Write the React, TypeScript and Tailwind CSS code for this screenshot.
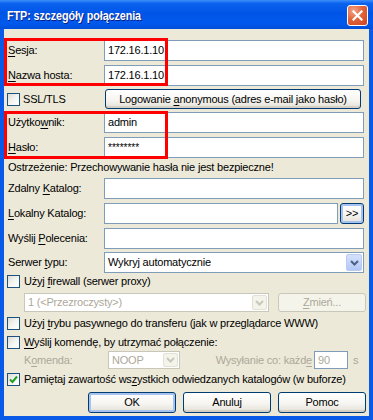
import React from 'react';

const U = ({ children }: { children: React.ReactNode }) => (
  <span className="underline decoration-1 underline-offset-[2px]">{children}</span>
);

function Field({ value, className = '', disabled = false }: { value?: string; className?: string; disabled?: boolean }) {
  return (
    <div
      className={`h-full bg-white border border-[#7F9DB9] pl-[3px] flex items-center whitespace-nowrap ${disabled ? 'text-[#ACA899]' : ''} ${className}`}
    >
      {value}
    </div>
  );
}

function Chevron({ color }: { color: string }) {
  return (
    <svg width="9" height="6" viewBox="0 0 9 6">
      <path d="M1 1 L4.5 4.5 L8 1" fill="none" stroke={color} strokeWidth="2" />
    </svg>
  );
}

function Combo({ value, className = '', disabled = false }: { value: string; className?: string; disabled?: boolean }) {
  return (
    <div
      className={`h-full flex items-stretch border bg-white p-[1px] ${disabled ? 'border-[#C9C7BA] text-[#ACA899]' : 'border-[#7F9DB9]'} ${className}`}
    >
      <div className="flex-1 flex items-center pl-[2px] whitespace-nowrap overflow-hidden">{value}</div>
      {disabled ? (
        <div className="w-[15px] shrink-0 flex items-center justify-center rounded-[2px] border border-[#E3E1D6] bg-[#F5F4EA]">
          <Chevron color="#C9C7BA" />
        </div>
      ) : (
        <div className="w-[16px] shrink-0 flex items-center justify-center rounded-[2px] border border-[#B9CBF3] bg-gradient-to-b from-[#D6E2FC] to-[#B2C8F6]">
          <Chevron color="#4D6185" />
        </div>
      )}
    </div>
  );
}

function Check({ checked = false }: { checked?: boolean }) {
  return (
    <div className="w-[13px] h-[13px] shrink-0 border border-[#1C5180] bg-gradient-to-br from-[#DCDCD7] via-[#F4F4F0] to-white flex items-center justify-center">
      {checked && (
        <svg width="9" height="9" viewBox="0 0 9 9">
          <path d="M1 4.5 L3.5 7 L8 1.5" fill="none" stroke="#21A121" strokeWidth="2" />
        </svg>
      )}
    </div>
  );
}

function Btn({ children, className = '', focus = false }: { children: React.ReactNode; className?: string; focus?: boolean }) {
  return (
    <div
      className={`flex items-center justify-center rounded-[3px] border border-[#003C74] bg-[linear-gradient(180deg,#FFFFFF_0%,#F6F5F1_55%,#E8E6DD_88%,#D6D0C5_100%)] whitespace-nowrap ${focus ? 'shadow-[inset_0_0_0_2px_#A8C2EF]' : 'shadow-[inset_0_-2px_0_#D6D0C5]'} ${className}`}
    >
      <span>{children}</span>
    </div>
  );
}

function Row({ label, children, className = '' }: { label: React.ReactNode; children: React.ReactNode; className?: string }) {
  return (
    <div className={`flex items-center h-[21px] ${className}`}>
      <div className="w-[96px] shrink-0 whitespace-nowrap">{label}</div>
      <div className="flex-1 flex h-full">{children}</div>
    </div>
  );
}

export default function App() {
  return (
    <div className="w-[373px] h-[420px] flex flex-col bg-[#0A5AE8] font-['Liberation_Sans','Noto_Sans',sans-serif] text-[11px] tracking-[-0.2px] text-black overflow-hidden">
      <div className="h-[29px] shrink-0 flex items-start justify-between pl-[7px] pr-[5px] bg-[linear-gradient(180deg,#3D8FFB_0%,#0A62EE_12%,#0055E6_45%,#0059ED_80%,#004FD9_100%)]">
        <span className="self-center mt-[2px] font-bold text-[13px] text-white [text-shadow:1px_1px_0_#0A1E80] tracking-[-0.1px] origin-left scale-x-[0.83] whitespace-nowrap">
          FTP: szczegóły połączenia
        </span>
        <div className="mt-[5px] w-[21px] h-[21px] rounded-[3px] border border-white bg-[radial-gradient(circle_at_30%_25%,#F2A48A_0%,#E2643C_45%,#CB4420_100%)] flex items-center justify-center">
          <svg width="11" height="11" viewBox="0 0 11 11">
            <path d="M1.5 1.5 L9.5 9.5 M9.5 1.5 L1.5 9.5" stroke="white" strokeWidth="2.2" strokeLinecap="square" />
          </svg>
        </div>
      </div>

      <div className="relative ml-[4px] w-[365px] h-[387px] bg-[#ECE9D8] flex flex-col pl-[4px] pr-[5px] pt-[11px]">
        <div className="absolute left-0 top-[9px] w-[164px] h-[48px] border-[3px] border-[#FF0000] pointer-events-none z-10" />
        <div className="absolute left-0 top-[82px] w-[164px] h-[48px] border-[3px] border-[#FF0000] pointer-events-none z-10" />

        <Row label={<><U>S</U>esja:</>}>
          <Field value="172.16.1.10" className="flex-1" />
        </Row>
        <Row label={<><U>N</U>azwa hosta:</>} className="mt-[4px]">
          <Field value="172.16.1.10" className="flex-1" />
        </Row>

        <div className="flex items-center h-[20px] mt-[3px]">
          <div className="w-[98px] shrink-0 flex items-center gap-[3px] -ml-[1px]">
            <Check />
            <span>SSL/TLS</span>
          </div>
          <Btn className="h-full w-[256px]">
            Logowanie <U>a</U>nonymous (adres e-mail jako hasło)
          </Btn>
        </div>

        <Row label={<>Użytko<U>w</U>nik:</>} className="mt-[3px]">
          <Field value="admin" className="flex-1" />
        </Row>
        <Row label={<><U>H</U>asło:</>} className="mt-[4px]">
          <Field value="********" className="flex-1 text-[10px] tracking-[0px]" />
        </Row>

        <div className="h-[16px] mt-[1px] flex items-center whitespace-nowrap">
          Ostrzeżenie: Przechowywanie hasła nie jest bezpieczne!
        </div>

        <Row label={<>Zdalny <U>K</U>atalog:</>} className="mt-[3px]">
          <Field className="flex-1" />
        </Row>
        <Row label={<><U>L</U>okalny Katalog:</>} className="mt-[4px]">
          <Field className="flex-1" />
          <Btn focus className="ml-[2px] w-[24px] h-[21px] text-[11px]">&gt;&gt;</Btn>
        </Row>
        <Row label={<>Wyślij <U>P</U>olecenia:</>} className="mt-[4px]">
          <Field className="flex-1" />
        </Row>
        <Row label={<>Serwer <U>t</U>ypu:</>} className="mt-[3px]">
          <Combo value="Wykryj automatycznie" className="flex-1" />
        </Row>

        <div className="flex items-center gap-[4px] h-[13px] mt-[2px] -ml-[1px] whitespace-nowrap">
          <Check />
          <span>Użyj <U>f</U>irewall (serwer proxy)</span>
        </div>

        <div className="flex h-[19px] mt-[5px] -mr-[2px]">
          <Combo disabled value="1 (<Przezroczysty>)" className="ml-[16px] w-[245px]" />
          <div className="ml-[9px] w-[88px] h-full rounded-[3px] border border-[#C9C7BA] bg-[#F5F4EA] text-[#ACA899] flex items-center justify-center">
            <span><U>Z</U>mień...</span>
          </div>
        </div>

        <div className="flex items-center gap-[4px] h-[13px] mt-[5px] -ml-[1px] whitespace-nowrap">
          <Check />
          <span>Użyj <U>t</U>rybu pasywnego do transferu (jak w przeglądarce WWW)</span>
        </div>
        <div className="flex items-center gap-[4px] h-[13px] mt-[6px] -ml-[1px] whitespace-nowrap">
          <Check />
          <span><U>W</U>yślij komendę, by utrzymać połączenie:</span>
        </div>

        <div className="flex items-center h-[18px] mt-[2px] text-[#ACA899] whitespace-nowrap">
          <span className="ml-[16px] w-[84px]">K<U>o</U>menda:</span>
          <Combo disabled value="NOOP" className="w-[72px]" />
          <span className="w-[134px] text-right pr-[2px]">Wysyłanie co: każd<U>e</U></span>
          <div className="w-[34px] h-full bg-white border border-[#7F9DB9] pl-[3px] flex items-center">90</div>
          <span className="ml-[5px]">s</span>
        </div>

        <div className="flex items-center gap-[4px] h-[13px] mt-[4px] -ml-[1px] whitespace-nowrap">
          <Check checked />
          <span>Pamiętaj zawartość ws<U>z</U>ystkich odwiedzanych katalogów (w buforze)</span>
        </div>

        <div className="flex justify-end gap-[7px] h-[21px] mt-[6px] -mr-[2px]">
          <Btn focus className="w-[88px] h-full">OK</Btn>
          <Btn className="w-[88px] h-full">Anuluj</Btn>
          <Btn className="w-[88px] h-full">Pomoc</Btn>
        </div>
      </div>
    </div>
  );
}
